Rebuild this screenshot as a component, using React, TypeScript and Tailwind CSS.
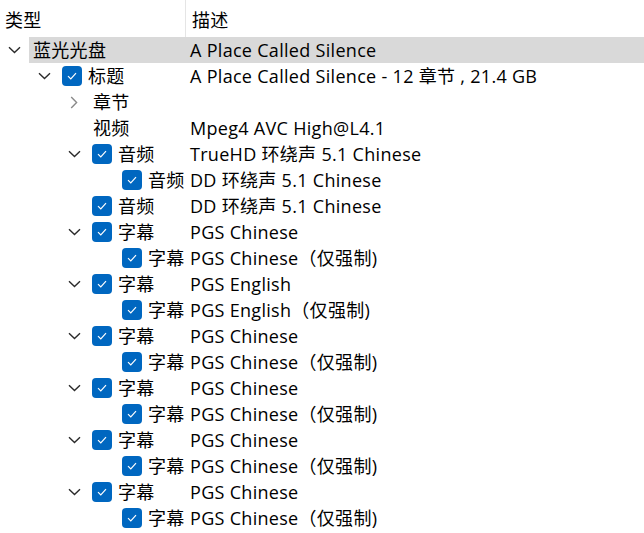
import React from 'react';

type Row = {
  level: number;
  expander?: 'open' | 'closed';
  checked?: boolean;
  label: string;
  desc: string;
  selected?: boolean;
};

const rows: Row[] = [
  { level: 0, expander: 'open', label: '蓝光光盘', desc: 'A Place Called Silence', selected: true },
  { level: 1, expander: 'open', checked: true, label: '标题', desc: 'A Place Called Silence - 12 章节 , 21.4 GB' },
  { level: 2, expander: 'closed', label: '章节', desc: '' },
  { level: 2, label: '视频', desc: 'Mpeg4 AVC High@L4.1' },
  { level: 2, expander: 'open', checked: true, label: '音频', desc: 'TrueHD 环绕声 5.1 Chinese' },
  { level: 3, checked: true, label: '音频', desc: 'DD 环绕声 5.1 Chinese' },
  { level: 2, checked: true, label: '音频', desc: 'DD 环绕声 5.1 Chinese' },
  { level: 2, expander: 'open', checked: true, label: '字幕', desc: 'PGS Chinese' },
  { level: 3, checked: true, label: '字幕', desc: 'PGS Chinese（仅强制)' },
  { level: 2, expander: 'open', checked: true, label: '字幕', desc: 'PGS English' },
  { level: 3, checked: true, label: '字幕', desc: 'PGS English（仅强制)' },
  { level: 2, expander: 'open', checked: true, label: '字幕', desc: 'PGS Chinese' },
  { level: 3, checked: true, label: '字幕', desc: 'PGS Chinese（仅强制)' },
  { level: 2, expander: 'open', checked: true, label: '字幕', desc: 'PGS Chinese' },
  { level: 3, checked: true, label: '字幕', desc: 'PGS Chinese（仅强制)' },
  { level: 2, expander: 'open', checked: true, label: '字幕', desc: 'PGS Chinese' },
  { level: 3, checked: true, label: '字幕', desc: 'PGS Chinese（仅强制)' },
  { level: 2, expander: 'open', checked: true, label: '字幕', desc: 'PGS Chinese' },
  { level: 3, checked: true, label: '字幕', desc: 'PGS Chinese（仅强制)' },
];

function Chevron({ open }: { open: boolean }) {
  return open ? (
    <svg width="13" height="8" viewBox="0 0 13 8" fill="none">
      <path d="M1 1.2 L6.5 6.6 L12 1.2" stroke="#2b2b2b" strokeWidth="1.4" />
    </svg>
  ) : (
    <svg width="8" height="13" viewBox="0 0 8 13" fill="none">
      <path d="M1.2 1 L6.6 6.5 L1.2 12" stroke="#8a8a8a" strokeWidth="1.4" />
    </svg>
  );
}

function CheckBox() {
  return (
    <div className="ml-[3px] mr-[6px] flex h-[20px] w-[20px] shrink-0 items-center justify-center rounded-[4px] bg-[#0067c0]">
      <svg width="10" height="8" viewBox="0 0 10 8" fill="none">
        <path d="M1 4.2 L3.8 7 L9 1.2" stroke="#ffffff" strokeWidth="1.2" />
      </svg>
    </div>
  );
}

export default function App() {
  return (
    <div
      className="h-[533px] w-[644px] overflow-hidden bg-white text-[18px] tracking-[0.3px] text-black"
      style={{ fontFamily: '"Open Sans", "Noto Sans CJK SC", sans-serif' }}
    >
      {/* Header */}
      <div className="flex h-[37px]">
        <div className="flex w-[186px] items-center border-r border-[#e5e5e5] pl-[5px] pt-[3px]">类型</div>
        <div className="flex flex-1 items-center pl-[6px] pt-[3px]">描述</div>
      </div>

      {/* Tree rows */}
      {rows.map((row, i) => (
        <div key={i} className="flex h-[26px] items-center whitespace-nowrap">
          <div className="flex shrink-0" style={{ width: 29 + row.level * 30 }}>
            <div className="ml-auto flex w-[30px] items-center justify-center">
              {row.expander && <Chevron open={row.expander === 'open'} />}
            </div>
          </div>
          <div className={`flex h-full flex-1 items-center ${row.selected ? 'bg-[#d9d9d9]' : ''}`}>
            <div className="flex items-center" style={{ width: 157 - row.level * 30 }}>
              {row.checked ? <CheckBox /> : <span className="w-[4px] shrink-0" />}
              <span>{row.label}</span>
            </div>
            <span className="pl-[4px]">{row.desc}</span>
          </div>
        </div>
      ))}
    </div>
  );
}
